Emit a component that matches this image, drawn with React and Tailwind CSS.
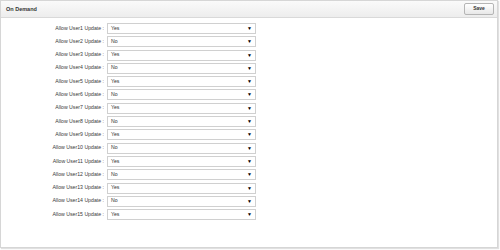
import React from "react";

const rows = Array.from({ length: 15 }, (_, i) => ({
  label: `Allow User${i + 1} Update :`,
  value: i % 2 === 0 ? "Yes" : "No",
}));

export default function App() {
  return (
    <div className="w-[500px] h-[250px] bg-white" style={{ fontFamily: '"Liberation Sans", Arial, sans-serif' }}>
      <div className="w-[498px] h-[248px] border border-[#d6d6d6] shadow-[1px_1px_1px_rgba(0,0,0,0.12)] flex flex-col">
        <div className="h-[17px] flex items-center justify-between px-[5px] bg-gradient-to-b from-[#fafafa] to-[#ededed] border-b border-[#d9d9d9]">
          <span className="text-[5.5px] font-bold text-[#333]">On Demand</span>
          <button className="h-[12px] w-[30px] mr-[-2px] rounded-[2px] border border-[#b5b5b5] bg-gradient-to-b from-white to-[#e8e8e8] text-[5px] font-bold text-[#333] flex items-center justify-center">
            Save
          </button>
        </div>
        <div className="flex flex-col gap-[2.3px] pt-[5px]">
          {rows.map((r) => (
            <div key={r.label} className="flex items-center h-[11px]">
              <div className="w-[103px] text-right text-[5.2px] text-[#3a3a3a] whitespace-nowrap">{r.label}</div>
              <div className="ml-[3px] w-[149px] h-[11px] border border-[#d0d0d0] bg-white flex items-center justify-between pl-[3px] pr-[3px]">
                <span className="text-[5.2px] text-[#333]">{r.value}</span>
                <span className="text-[5px] text-black leading-none">▼</span>
              </div>
            </div>
          ))}
        </div>
      </div>
    </div>
  );
}
